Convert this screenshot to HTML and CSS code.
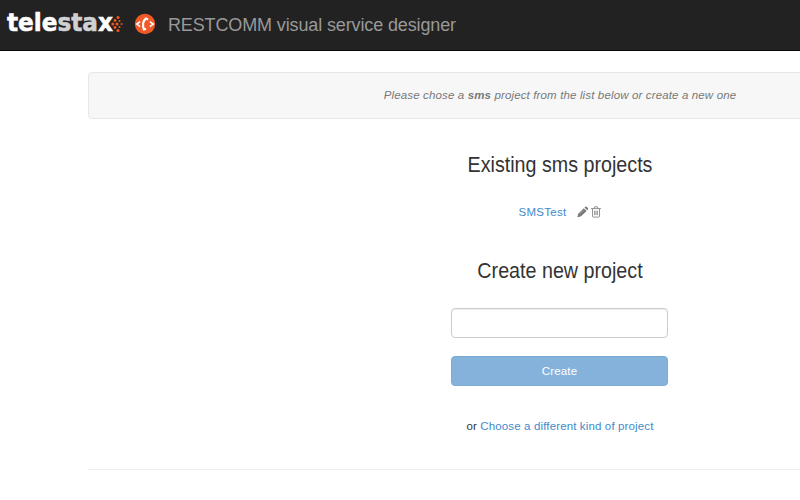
FILE: index.html
```
<!DOCTYPE html>
<html lang="en">
<head>
<meta charset="utf-8">
<title>RESTCOMM visual service designer</title>
<link rel="stylesheet" href="styles.css">
</head>
<body>
<header class="navbar">
  <svg class="logo" width="126" height="40" viewBox="0 0 126 40" role="img" aria-label="telestax">
    <text class="wordmark" y="31.2" textLength="106" lengthAdjust="spacingAndGlyphs" x="7"><tspan fill="#fff" stroke="#fff">tele</tspan><tspan fill="#cfd1d3" stroke="#cfd1d3">sta</tspan><tspan fill="#fff" stroke="#fff">x</tspan></text>
    <g fill="#f0571f">
      <circle cx="112.8" cy="24" r="1.5"/>
      <circle cx="115" cy="20.5" r="1.4"/><circle cx="115" cy="27.5" r="1.4"/>
      <circle cx="118" cy="17.4" r="1.5"/><circle cx="117" cy="24" r="1.6"/><circle cx="118" cy="30.4" r="1.5"/>
      <circle cx="119.5" cy="21" r="1.1"/><circle cx="119.5" cy="27" r="1.1"/>
      <circle cx="121.6" cy="24" r="1"/>
    </g>
  </svg>
  <svg class="badge" width="22" height="22" viewBox="0 0 22 22" aria-hidden="true">
    <circle cx="11" cy="11" r="10.2" fill="#f05a28"/>
    <g fill="none" stroke="#fff">
      <path d="M6.2 8.6 2.8 11.1l3.4 2.5M15.8 8.6l3.4 2.5-3.4 2.5" stroke-width="1.6"/>
      <path d="M12 5.5C8.7 7.6 8.4 13 9.9 16.4" stroke-width="2.1"/>
      <path d="M12 5.3l1.4 1M9.9 16.6l1.4-.6" stroke-width="2" stroke-linecap="round"/>
    </g>
  </svg>
  <span class="brand">RESTCOMM visual service designer</span>
</header>
<main class="container">
  <div class="well"><em>Please chose a <strong>sms</strong> project from the list below or create a new one</em></div>
  <h3 class="existing">Existing sms projects</h3>
  <div class="project">
    <a href="#">SMSTest</a>
    <svg class="pencil" width="11" height="12" viewBox="0 0 11 12" aria-hidden="true">
      <path d="M.4 11.2 1 8 6.8 2.2l2.8 2.8L3.7 10.6zM7.5 1.5l.8-.8q.6-.5 1.2 0L11 2.1q.5.6 0 1.2l-.8.9z" fill="#777"/>
      <path d="M2.5 8.2l5-5M1.3 9.3l1.3 1.2" stroke="#bbb" stroke-width=".5"/>
    </svg>
    <svg class="trash" width="10" height="12" viewBox="0 0 10 12" aria-hidden="true">
      <path d="M0 2.6h10M3 2.5l.6-1.7h2.8L7 2.5M1.5 2.8v7.4q0 .9.8.9h5.4q.8 0 .8-.9V2.8M3.6 4.7v4.4M5 4.7v4.4M6.4 4.7v4.4" fill="none" stroke="#777" stroke-width=".8"/>
    </svg>
  </div>
  <h3 class="create-title">Create new project</h3>
  <form class="create-form">
    <input type="text" aria-label="Project name">
    <button type="button" disabled>Create</button>
  </form>
  <p class="other">or <a href="#">Choose a different kind of project</a></p>
  <hr>
</main>
</body>
</html>
```
FILE: styles.css
```
* { box-sizing: border-box; }
body {
  margin: 0;
  height: 500px;
  overflow: hidden;
  background: #fff;
  color: #333;
  font: 11.5px/16px "Liberation Sans", Arial, sans-serif;
  letter-spacing: .14px;
}
a { color: #428bca; text-decoration: none; }
.navbar {
  display: flex;
  height: 51px;
  background: #222;
  border-bottom: 1px solid #080808;
}
.logo { flex: none; }
.wordmark { font: bold 25.5px "DejaVu Sans", sans-serif; letter-spacing: 0; stroke-width: .6px; }
.badge { margin: 13px 0 0 8px; }
.brand {
  margin: 13px 0 0 12px;
  font-size: 18px;
  line-height: 24px;
  letter-spacing: -.13px;
  color: #999;
}
.container { width: 944px; margin: 21px 0 0 88px; text-align: center; }
.well {
  height: 47px;
  padding: 14px 0;
  border: 1px solid #e7e7e7;
  border-radius: 4px;
  background: #f7f7f7;
  color: #777;
}
h3 {
  margin: 0;
  font-size: 22px;
  line-height: 26px;
  font-weight: 400;
  letter-spacing: 0;
  transform: scaleX(.895);
}
.existing { margin-top: 33px; }
.project {
  display: flex;
  justify-content: center;
  align-items: center;
  height: 16px;
  margin-top: 26px;
}
.project a { letter-spacing: .25px; }
.pencil { margin-left: 11px; }
.trash { margin-left: 3px; }
.create-title { margin-top: 38px; }
.create-form { width: 217px; margin: 24px 0 0 363px; }
.create-form input, .create-form button {
  display: block;
  width: 100%;
  height: 30px;
  border-radius: 4px;
  font: inherit;
  letter-spacing: inherit;
}
.create-form input {
  padding: 5px 9px;
  border: 1px solid #ccc;
  box-shadow: inset 0 1px 1px rgba(0,0,0,.075);
}
.create-form button {
  margin-top: 18px;
  padding: 0;
  border: 1px solid #78abd5;
  background: #85b2db;
  color: #fff;
}
.other { margin: 32px 0 0; }
hr { height: 1px; margin: 35px 0 0; border: 0; background: #eee; }
```
